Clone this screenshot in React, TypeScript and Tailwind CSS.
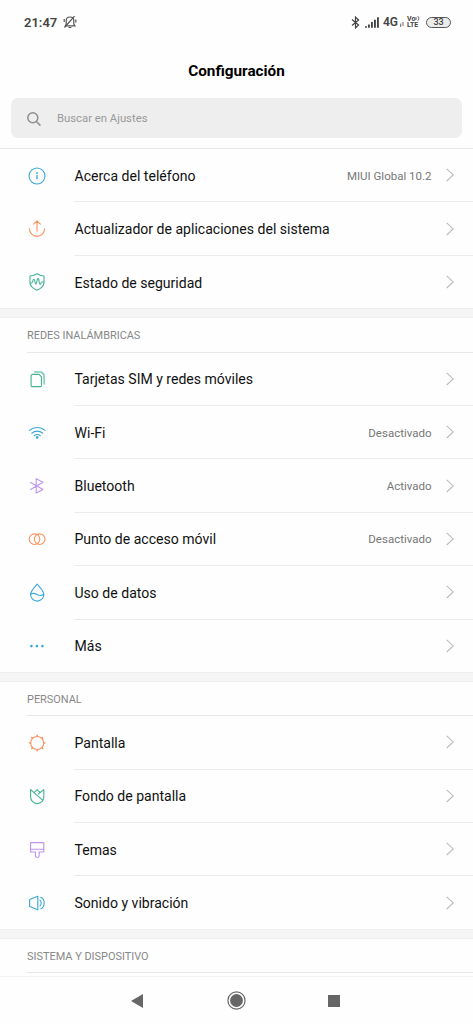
import type { ReactNode } from 'react';

type Item = {
  label: string;
  icon: ReactNode;
  value?: string;
};

type Section = {
  title?: string;
  items: Item[];
};

const BLUE = '#3ba7d9';
const ORANGE = '#f9935f';
const GREEN = '#45b393';
const PURPLE = '#bf96ee';

function Icon({ color, children }: { color: string; children: ReactNode }) {
  return (
    <svg
      className="h-[18px] w-[18px] shrink-0 overflow-visible"
      viewBox="0 0 18 18"
      fill="none"
      stroke={color}
      strokeWidth="1.1"
      strokeLinecap="round"
      strokeLinejoin="round"
    >
      {children}
    </svg>
  );
}

const InfoIcon = () => (
  <Icon color={BLUE}>
    <circle cx="9" cy="9" r="8" />
    <path d="M9 8v4.2" strokeWidth="1.4" strokeLinecap="butt" />
    <circle cx="9" cy="6" r="0.9" fill={BLUE} stroke="none" />
  </Icon>
);

const UpdateIcon = () => (
  <Icon color={ORANGE}>
    <path d="M9 11.3V1.3M5.6 4.2 9 1l3.4 3.2" />
    <path d="M1.4 8.8a7.6 7.6 0 1 0 15.2 0" />
  </Icon>
);

const ShieldIcon = () => (
  <Icon color={GREEN}>
    <path d="M9 .8c2.200 1.500 4.600 2 7 2.200v6.300c0 3.800-3 6.300-7 7.900-4-1.600-7-4.100-7-7.900V3C4.400 2.800 6.800 2.300 9 .8z" />
    <path d="M2.200 10h1.300c1.200 0 1.300-3.600 2.300-3.600 1.200 0 1.100 4.800 2.100 4.800s1-5.800 2.100-5.800c1.200 0 1 6 2.100 6 .9 0 .8-2.400 1.700-2.400h2" />
  </Icon>
);

const SimIcon = () => (
  <Icon color={GREEN}>
    <path d="M4.200 4.400h6.900l2.400 2.400v8.900a.9.9 0 0 1-.9.9H4a.9.9 0 0 1-.9-.9V5.500z" />
    <path d="M6.600 1.900h6.500l3 3v9" strokeWidth="1.500" opacity="0.7" />
  </Icon>
);

const WifiIcon = () => (
  <Icon color={BLUE}>
    <path
      d="M1.500 6.400c4.400-3.900 11.200-3.900 15.600 0M3.800 9.200c3.200-2.700 7.700-2.700 10.900 0M6.200 11.700c1.900-1.500 4.200-1.500 6.100 0"
      strokeWidth="1.200"
    />
    <circle cx="9.200" cy="13.400" r="1.300" fill={BLUE} stroke="none" />
  </Icon>
);

const BluetoothIcon = () => (
  <Icon color={PURPLE}>
    <path d="M2.600 5.400 15 12.500 8.200 16.100V1.700L15 5.300 2.600 12.500" />
  </Icon>
);

const HotspotIcon = () => (
  <Icon color={ORANGE}>
    <circle cx="6.500" cy="9.200" r="5.300" />
    <circle cx="11.700" cy="9.200" r="5.300" />
  </Icon>
);

const DropIcon = () => (
  <Icon color={BLUE}>
    <path d="M9.200.2c2.600 3 6.600 7 6.600 10.300a6.600 6.600 0 0 1-13.200 0C2.600 7.200 6.600 3.200 9.200.2z" />
    <path d="M2.700 10c2.200-1.300 4.300-.6 6.300.5s4.500 1.500 6.700-.2" />
  </Icon>
);

const MoreIcon = () => (
  <Icon color={BLUE}>
    <g fill={BLUE} stroke="none">
      <circle cx="3.400" cy="9.100" r="1.300" />
      <circle cx="8.900" cy="9.100" r="1.300" />
      <circle cx="14.400" cy="9.100" r="1.300" />
    </g>
  </Icon>
);

const SunIcon = () => (
  <Icon color={ORANGE}>
    <circle cx="9.200" cy="9" r="6.500" />
    <path
      d="M9.200 2V1.300M9.200 16.700V16M2.200 9h-.7M16.900 9h-.7M4.300 4.100l-.5-.5M14.600 14.400l-.5-.5M14.100 4.100l.5-.5M3.800 14.400l.5-.5"
      strokeWidth="1.500"
    />
  </Icon>
);

const TulipIcon = () => (
  <Icon color={GREEN}>
    <path d="M2.600 2.600v7.400a6.600 6.600 0 0 0 13.200 0V2.600L10.300 7M2.600 2.600l11.400 10" />
    <path d="M6.300 5.400 9.200 2.700l2.900 2.600" />
  </Icon>
);

const BrushIcon = () => (
  <Icon color={PURPLE}>
    <path d="M2.600 1.600h13.200v9.400h-4.600v3.600a1.900 1.900 0 0 1-3.800 0V11H2.600z" />
    <path d="M2.600 8.300h13.200" />
  </Icon>
);

const SoundIcon = () => (
  <Icon color={BLUE}>
    <path d="M9.800 2.300v13.400L1.600 12.600V5.400z" />
    <path d="M12 6.100c1.500 1.500 1.500 4.300 0 5.800M12.900 3.200c4.400 2.200 4.400 9.400 0 11.600" />
  </Icon>
);

const sections: Section[] = [
  {
    items: [
      { label: 'Acerca del teléfono', icon: <InfoIcon />, value: 'MIUI Global 10.2' },
      { label: 'Actualizador de aplicaciones del sistema', icon: <UpdateIcon /> },
      { label: 'Estado de seguridad', icon: <ShieldIcon /> },
    ],
  },
  {
    title: 'REDES INALÁMBRICAS',
    items: [
      { label: 'Tarjetas SIM y redes móviles', icon: <SimIcon /> },
      { label: 'Wi-Fi', icon: <WifiIcon />, value: 'Desactivado' },
      { label: 'Bluetooth', icon: <BluetoothIcon />, value: 'Activado' },
      { label: 'Punto de acceso móvil', icon: <HotspotIcon />, value: 'Desactivado' },
      { label: 'Uso de datos', icon: <DropIcon /> },
      { label: 'Más', icon: <MoreIcon /> },
    ],
  },
  {
    title: 'PERSONAL',
    items: [
      { label: 'Pantalla', icon: <SunIcon /> },
      { label: 'Fondo de pantalla', icon: <TulipIcon /> },
      { label: 'Temas', icon: <BrushIcon /> },
      { label: 'Sonido y vibración', icon: <SoundIcon /> },
    ],
  },
  { title: 'SISTEMA Y DISPOSITIVO', items: [] },
];

function StatusBar() {
  return (
    <div className="flex h-11 shrink-0 items-center justify-between pr-[22px] pl-6 text-[#444]">
      <div className="flex items-center gap-[6px]">
        <span className="text-[13px] leading-none font-semibold">21:47</span>
        <svg className="mb-px h-[14px] w-[14px]" viewBox="0 0 14 14" fill="none" stroke="#555" strokeWidth="1.200">
          <path d="M2.300 10.800h9.600l-1.100-1.700V5.800C10.800 3.500 9.200 2 7 2S3.200 3.500 3.200 5.800v3.300z" />
          <path d="M5.600 12.500h2.800M1.500 12.500 11.500 1.200M1.200 4v3M12.800 4.500v3" />
        </svg>
      </div>
      <div className="flex items-center">
        <svg className="h-[13px] w-[9px]" viewBox="0 0 9 13" fill="none" stroke="#444" strokeWidth="1.200">
          <path d="M1 3.500 7.600 9 4.500 11.900V1.100L7.600 4 1 9.500" />
        </svg>
        <svg className="ml-[5px] h-[11px] w-[15px]" viewBox="0 0 16 11" fill="#444">
          <path d="M0 9.500h2V11H0zM3.200 7.500h2V11h-2zM6.400 5h2v6h-2zM9.600 2.500h2V11h-2zM12.800 0h2v11h-2z" />
        </svg>
        <span className="ml-[3px] text-[12px] leading-none font-semibold">4G</span>
        <svg className="mt-[5px] ml-[2px] h-[5px] w-[4px]" viewBox="0 0 4 5" stroke="#666" strokeWidth="1">
          <path d="M.7 1.500V5M3 0v4" />
        </svg>
        <div className="ml-[3px] flex w-[13px] flex-col text-[7px] leading-[6.500px] font-bold">
          <div className="flex items-center">
            <span>Vo</span>
            <svg className="h-[5px] w-[5px] shrink-0" viewBox="0 0 5 5" fill="none" stroke="#444" strokeWidth="0.900">
              <path d="M.6 1c.8.8.8 2.200 0 3M2.700.2c1.500 1.300 1.500 3.300 0 4.600" />
            </svg>
          </div>
          <span>LTE</span>
        </div>
        <div className="ml-[6px] flex h-[11px] w-[25px] items-center justify-center rounded-full border border-[#555] bg-[#ececec] text-[9px] leading-none font-medium">
          33
        </div>
      </div>
    </div>
  );
}

function SearchBox() {
  return (
    <div className="mx-[11px] flex h-[40px] shrink-0 items-center rounded-[7px] bg-[#eeeeee] pl-4">
      <svg className="mt-px h-[14px] w-[14px]" viewBox="0 0 14 14" fill="none" stroke="#8e8e8e" strokeWidth="1.500">
        <circle cx="5.800" cy="5.800" r="5" />
        <path d="m9.400 9.400 4 4.200" />
      </svg>
      <span className="ml-4 pt-[2px] text-[11.300px] text-[#999]">Buscar en Ajustes</span>
    </div>
  );
}

function Row({ item, last }: { item: Item; last: boolean }) {
  return (
    <div className={'flex items-center pl-[27.500px] ' + (last ? 'h-[52.600px]' : 'h-[53.400px]')}>
      {item.icon}
      <div
        className={
          'ml-[28.500px] flex h-full flex-1 items-center justify-between border-[#ebebeb] pr-[19px] ' +
          (last ? '' : 'border-b')
        }
      >
        <span className="pt-[2.200px] pl-[0.500px] text-[14.050px] text-[#111]">{item.label}</span>
        <div className="flex items-center">
          {item.value && <span className="mr-[14.500px] pt-[2.200px] text-[11.500px] text-[#777]">{item.value}</span>}
          <svg className="h-[14px] w-[8px]" viewBox="0 0 8 14" fill="none" stroke="#bbb" strokeWidth="1.100">
            <path d="m.7.8 6.500 6.100L.7 13" />
          </svg>
        </div>
      </div>
    </div>
  );
}

export default function App() {
  return (
    <div className="flex h-[1024px] w-[473px] flex-col overflow-hidden bg-[#fefefe] font-[Roboto,sans-serif]">
      <StatusBar />
      <h1 className="flex h-[54px] shrink-0 items-center justify-center text-[15.300px] font-bold text-black">
        Configuración
      </h1>
      <SearchBox />
      <main className="mt-[10px] min-h-0 flex-1 overflow-hidden border-t border-[#e8e8e8]">
        {sections.map((section, i) => (
          <section key={i}>
            {section.title && (
              <>
                <div className="h-[9.600px] border-y border-[#efefef] bg-[#f5f5f5]" />
                <div className="ml-[27px] flex h-[34.600px] items-center border-b border-[#e8e8e8] pt-[3px] text-[10.930px] text-[#888]">
                  {section.title}
                </div>
              </>
            )}
            {section.items.map((item, j) => (
              <Row key={item.label} item={item} last={j === section.items.length - 1} />
            ))}
          </section>
        ))}
      </main>
      <nav className="flex h-12 shrink-0 items-center border-t border-[#f2f2f2] pl-[131px]">
        <svg className="h-[14px] w-[12px]" viewBox="0 0 12 14" fill="#666">
          <path d="M0 7 12 0v14z" />
        </svg>
        <svg className="ml-[84px] h-[19px] w-[19px]" viewBox="0 0 19 19" fill="none" stroke="#666">
          <circle cx="9.500" cy="9.500" r="8.600" strokeWidth="1.200" />
          <circle cx="9.500" cy="9.500" r="6.400" fill="#666" stroke="none" />
        </svg>
        <div className="ml-[82px] h-[12px] w-[12px] bg-[#666]" />
      </nav>
    </div>
  );
}
